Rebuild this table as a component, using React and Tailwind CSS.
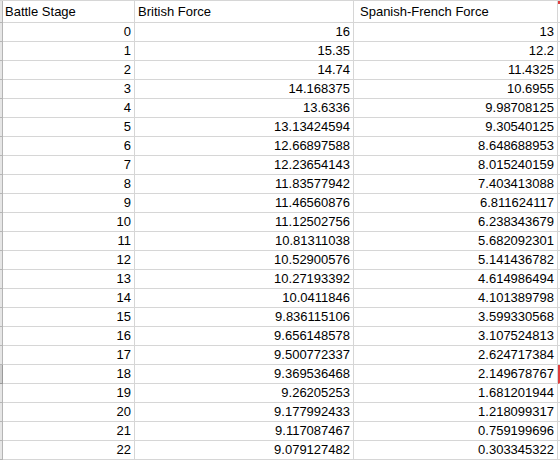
import React from "react";

const rows = [
  ["0", "16", "13"],
  ["1", "15.35", "12.2"],
  ["2", "14.74", "11.4325"],
  ["3", "14.168375", "10.6955"],
  ["4", "13.6336", "9.98708125"],
  ["5", "13.13424594", "9.30540125"],
  ["6", "12.66897588", "8.648688953"],
  ["7", "12.23654143", "8.015240159"],
  ["8", "11.83577942", "7.403413088"],
  ["9", "11.46560876", "6.811624117"],
  ["10", "11.12502756", "6.238343679"],
  ["11", "10.81311038", "5.682092301"],
  ["12", "10.52900576", "5.141436782"],
  ["13", "10.27193392", "4.614986494"],
  ["14", "10.0411846", "4.101389798"],
  ["15", "9.836115106", "3.599330568"],
  ["16", "9.656148578", "3.107524813"],
  ["17", "9.500772337", "2.624717384"],
  ["18", "9.369536468", "2.149678767"],
  ["19", "9.26205253", "1.681201944"],
  ["20", "9.177992433", "1.218099317"],
  ["21", "9.117087467", "0.759199696"],
  ["22", "9.079127482", "0.303345322"],
];

const App = () => {
  return (
    <div
      className="w-[560px] h-[461px] overflow-hidden bg-white text-black text-[13px]"
      style={{ fontFamily: '"Liberation Sans", Arial, sans-serif' }}
    >
      <div className="grid grid-cols-[3px_132px_219px_204px_2px] border-t border-[#d6d6d6]">
        {/* header row */}
        <div className="h-[22px] bg-[#e6e6e6] border-r border-b border-[#b5b5b5]" />
        <div className="h-[22px] flex items-center pl-[2px] border-r border-b border-[#d6d6d6]">
          Battle Stage
        </div>
        <div className="h-[22px] flex items-center pl-[3px] border-r border-b border-[#d6d6d6]">
          British Force
        </div>
        <div className="h-[22px] flex items-center pl-[6px] border-r border-b border-[#d6d6d6]">
          Spanish-French Force
        </div>
        <div className="h-[22px] border-b border-[#d6d6d6] relative">
          <div className="absolute right-0 top-0 w-[2px] h-[3px] bg-[#e04040]" />
        </div>

        {rows.map((r, i) => (
          <React.Fragment key={r[0]}>
            <div
              className={
                i === 18
                  ? "h-[19px] bg-[#cfcfcf] border-r border-b border-[#9a9a9a]"
                  : "h-[19px] bg-[#e6e6e6] border-r border-b border-[#b5b5b5]"
              }
            />
            <div className="h-[19px] flex items-center justify-end pr-[3px] border-r border-b border-[#d6d6d6]">
              {r[0]}
            </div>
            <div className="h-[19px] flex items-center justify-end pr-[3px] border-r border-b border-[#d6d6d6]">
              {r[1]}
            </div>
            <div className="h-[19px] flex items-center justify-end pr-[3px] border-r border-b border-[#d6d6d6]">
              {r[2]}
            </div>
            <div
              className={
                i === 18
                  ? "h-[19px] border-b border-[#d6d6d6] border-l-2 border-l-[#e04040]"
                  : "h-[19px] border-b border-[#d6d6d6]"
              }
            />
          </React.Fragment>
        ))}
      </div>
    </div>
  );
};

export default App;
